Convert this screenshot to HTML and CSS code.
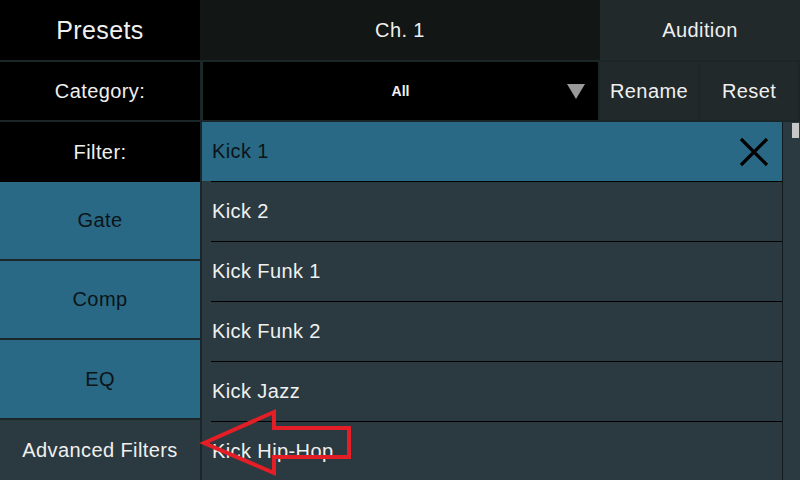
FILE: index.html
```html
<!DOCTYPE html>
<html lang="en">
<head>
    <meta charset="UTF-8" />
    <title>Presets</title>
    <link rel="stylesheet" href="styles.css">
</head>
<body>
    <div class="screen">
        <div class="top-bar">
            <div class="cell title">Presets</div>
            <div class="cell channel">Ch. 1</div>
            <div class="cell audition">Audition</div>
        </div>

        <div class="cat-bar">
            <div class="cell label">Category:</div>
            <div class="cell dropdown">
                <span class="dd-value">All</span>
                <span class="dd-arrow"></span>
            </div>
            <div class="cell action">Rename</div>
            <div class="cell action">Reset</div>
        </div>

        <div class="main">
            <div class="sidebar">
                <div class="side-item filter">Filter:</div>
                <div class="side-item tab tab-gate">Gate</div>
                <div class="side-item tab tab-comp">Comp</div>
                <div class="side-item tab tab-eq">EQ</div>
                <div class="side-item advanced">Advanced Filters</div>
            </div>

            <div class="list">
                <div class="row selected">
                    <span>Kick 1</span>
                    <svg class="clear-icon" width="30" height="30" viewBox="0 0 30 30">
                        <path d="M2 2 L28 28 M28 2 L2 28" stroke="#000" stroke-width="3.2" fill="none"/>
                    </svg>
                </div>
                <div class="row"><span>Kick 2</span></div>
                <div class="row"><span>Kick Funk 1</span></div>
                <div class="row"><span>Kick Funk 2</span></div>
                <div class="row"><span>Kick Jazz</span></div>
                <div class="row"><span>Kick Hip-Hop</span></div>
            </div>

            <div class="scrollbar">
                <div class="thumb"></div>
            </div>
        </div>

        <!-- callout arrow drawn over the screenshot -->
        <svg class="callout" width="160" height="80" viewBox="0 0 160 80">
            <polygon points="5,35 75,4 75,20 150,20 150,49 75,49 75,65" fill="none" stroke="#e41e26" stroke-width="4" stroke-linejoin="miter"/>
        </svg>
    </div>
</body>
</html>
```

FILE: styles.css
```css
:root {
    --line: #1b2629;
    --blue: #296985;
    --panel: #2b3a40;
    --btn: #21292b;
    --text: #f0f0f0;
    --dark-text: #0b1418;
}

* {
    box-sizing: border-box;
    margin: 0;
    padding: 0;
}

body {
    width: 800px;
    height: 480px;
    background: var(--line);
    font-family: 'Liberation Sans', Arial, sans-serif;
    color: var(--text);
    letter-spacing: 0.4px;
    overflow: hidden;
}

.screen {
    position: relative;
    width: 800px;
    height: 480px;
    display: flex;
    flex-direction: column;
    gap: 2px;
}

.cell {
    display: flex;
    align-items: center;
    justify-content: center;
}

/* Header */
.top-bar {
    display: flex;
    height: 60px;
}

.title {
    width: 200px;
    background: #000;
    font-size: 25px;
}

.channel {
    width: 400px;
    background: #121614;
    font-size: 20px;
}

.audition {
    width: 200px;
    background: var(--btn);
    font-size: 20px;
}

/* Category row */
.cat-bar {
    display: flex;
    height: 58px;
    gap: 2px;
}

.label {
    width: 200px;
    background: #000;
    font-size: 20px;
}

.dropdown {
    width: 396px;
    background: #000;
    position: relative;
    border-left: 1px solid #1e2a2c;
}

.dd-value {
    font-size: 14px;
    font-weight: bold;
    letter-spacing: 0;
}

.dd-arrow {
    position: absolute;
    right: 13px;
    top: 22px;
    width: 0;
    height: 0;
    border-left: 9px solid transparent;
    border-right: 9px solid transparent;
    border-top: 15px solid #9a9a9a;
}

.action {
    width: 98px;
    background: var(--btn);
    font-size: 20px;
}

/* Main area */
.main {
    display: flex;
    height: 358px;
}

.sidebar {
    width: 200px;
    display: flex;
    flex-direction: column;
    gap: 2px;
    margin-right: 2px;
}

.side-item {
    display: flex;
    align-items: center;
    justify-content: center;
    font-size: 20px;
}

.filter {
    height: 60px;
    background: #000;
    margin-bottom: -2px;
}

.tab {
    background: var(--blue);
    color: var(--dark-text);
}

.tab-gate { height: 77px; }
.tab-comp { height: 77px; }
.tab-eq { height: 78px; }

.advanced {
    flex: 1;
    background: var(--panel);
}

.list {
    width: 580px;
    background: var(--panel);
    overflow: hidden;
}

.row {
    position: relative;
    height: 60px;
    display: flex;
    align-items: center;
    padding-left: 10px;
    padding-bottom: 1px;
    font-size: 20px;
}

.row::after {
    content: "";
    position: absolute;
    left: 9px;
    right: 0;
    bottom: 0;
    height: 1px;
    background: #000;
}

.row.selected {
    background: var(--blue);
    color: var(--dark-text);
}

.row.selected::after {
    left: 0;
    background: var(--panel);
}

.row.selected + .row::before {
    content: "";
    position: absolute;
    left: 9px;
    right: 0;
    top: -1px;
    height: 1px;
    background: #000;
}

.clear-icon {
    position: absolute;
    right: 13px;
    top: 15px;
}

.scrollbar {
    width: 18px;
    background: var(--panel);
    border-left: 1px solid #111a1d;
    padding: 1px 1px 0 9px;
}

.thumb {
    width: 7px;
    height: 15px;
    background: #c6c8c8;
}

.callout {
    position: absolute;
    left: 199px;
    top: 408px;
}
```
